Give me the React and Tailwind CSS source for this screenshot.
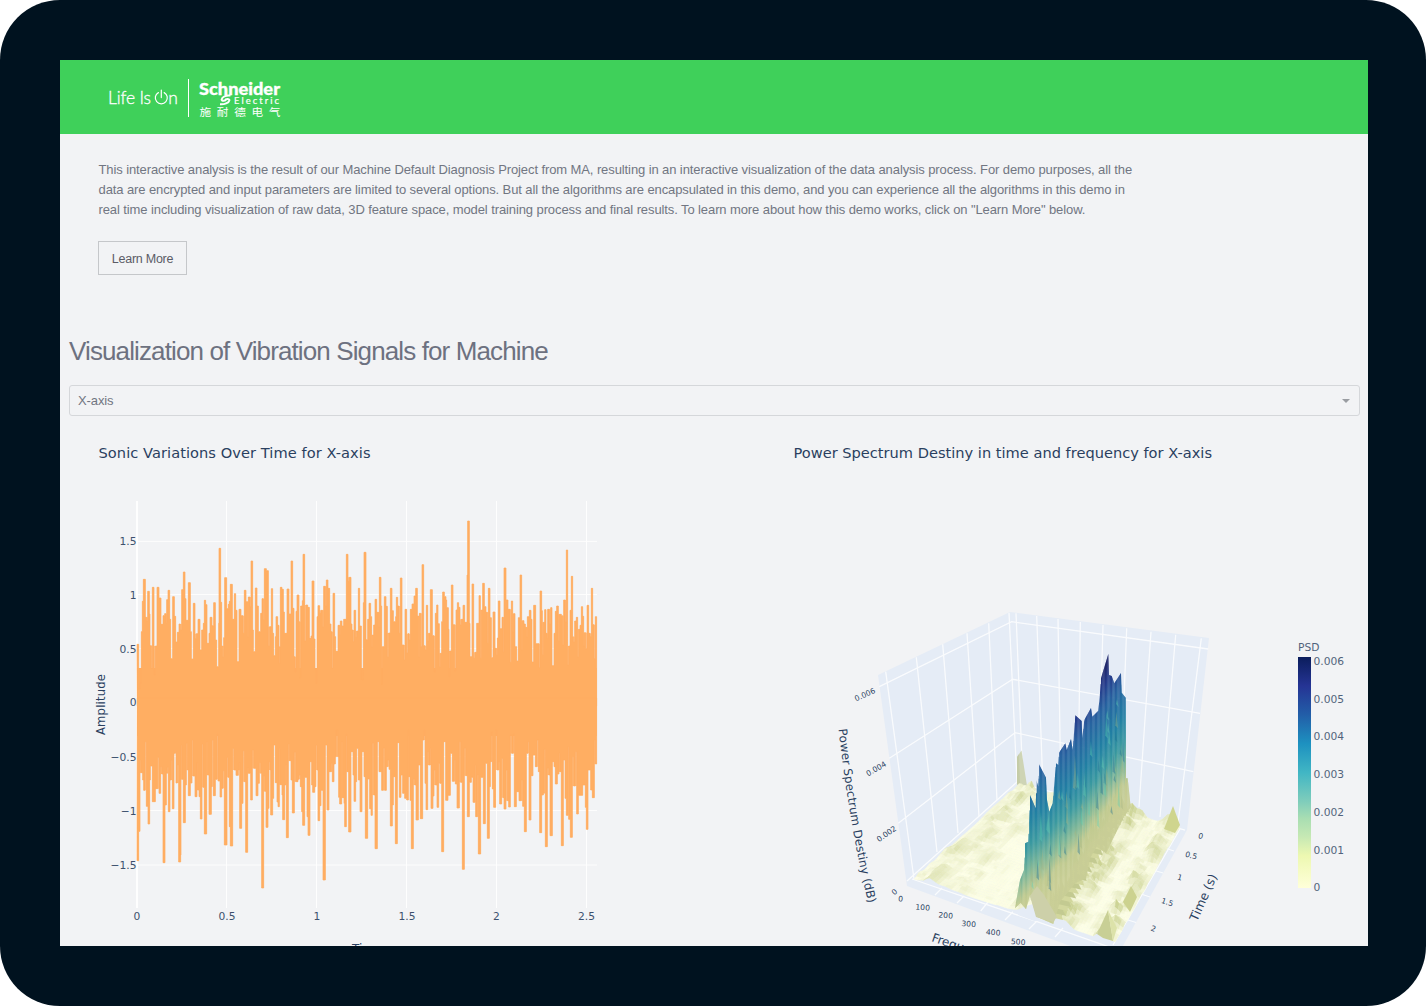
import React from "react";

/* Envelope samples of the vibration signal: x and y of every step, in thirds of a pixel. */
const UPPER_A =
  "141 463,146 597,151 578,154 425,157 334,160 268,166 382,170 392,173 304,178 372,180 467,184 537,187 292,192 555,196 468,201 292,207 324,213 403,219 377,224 371,228 398,230 329,234 301,239 388,242 506,248 320,253 379,257 456,262 427,267 402,271 420,275 299,280 246,285 326,288 391,295 278,301 425,304 507,310 340,315 446,319 431,324 388,330 480,335 420,340 400,343 331,347 344,351 460,357 430,360 382,366 407,371 338,376 450,380 530,386 400,387 175,392 337,395 468,398 500,401 443,404 263,410 356,415 343,418 334,421 283,427 388,433 311,437 361,441 515,447 358,453 377,459 430,463 301,468 335,473 440,475 321,480 350,483 213,488 420,490 485,496 294,501 348,505 425,512 370,516 326,520 390,523 236,529 242,535 467,539 410,544 296,548 430,551 497,556 440,558 380,563 406,567 520,569 470,571 292,576 298,580 366,583 430,591 297,597 372,603 213,608 355,612 500,615 546,618 364,621 315,627 395,629 563,632 348,637 332,639 193,644 453,648 345,653 352,658 445,663 438,666 273,672 447,675 538,678 580,681 380,684 347,689 370,693 361,698 410,701 289,706 347,709 270,714 295,719 402,723 425,726 535,729 310,734 440,737 484,744 406,749 435,751 393,756 408,761 388,769 193,774 274,778 262";
const UPPER_B =
  "3 402,6 420,9 455,12 361,17 442,20 423,25 295,29 408,34 570,40 338,42 187,48 449,53 388,57 340,62 380,65 470,67 435,71 405,75 328,80 367,86 410,88 262,93 348,95 583,97 470,103 320,108 349,112 500,116 429,121 295,126 362,130 395,137 380,139 322,143 348,147 430,151 264,156 465,162 510,165 358,170 489,174 431,177 450,181 358,186 342,192 318,197 295,202 378,206 500,208 370,212 470,216 224,221 467,225 480,229 346,233 453,236 430,241 299,247 437,252 545,256 370,260 345,264 401,268 530,271 490,275 395,278 306,283 320,288 330,290 353,295 418,297 560,299 483,304 285,309 404,314 543,318 360,322 338,326 352,330 405,334 388,339 346,344 397,351 255,353 93,358 400,360 500,366 282,371 505,375 487,380 400,387 317,391 505,394 360,398 280,403 350,408 367,412 460,415 295,420 383,424 503,429 366,435 475,439 495,442 444,445 333,450 416,456 382,460 487,462 234,468 330,474 358,480 517,484 333,488 425,490 371,495 470,500 513,505 383,510 255,515 480,517 392,522 402,526 412,530 440,532 380,538 361,543 388,546 516,551 346,557 461,567 533,570 303,575 362,577 495,580 397,584 359,588 430,591 445,593 358,598 402,602 353,606 527,612 430,616 364,620 348,625 453,628 373,634 377,638 465,641 330,646 395,649 180,653 525,656 468,660 361,664 259,668 440,670 455,674 393,679 382,683 500,686 418,690 406,694 350,698 379,701 467,703 428,707 476,711 346,716 430,720 440,724 295,728 404,732 506,736 380";
const LOWER_A =
  "141 422,146 334,150 120,152 158,158 180,161 211,165 65,169 259,174 312,179 180,181 138,187 245,196 206,203 112,207 220,212 140,215 162,219 428,225 255,229 160,232 142,235 275,240 180,244 121,247 266,252 100,256 95,258 189,262 135,266 426,272 405,273 75,275 178,280 308,286 195,289 70,292 150,295 227,301 189,306 60,309 168,315 230,321 128,322 210,327 230,331 297,336 72,339 202,343 342,350 65,352 165,357 283,364 200,366 60,370 227,376 178,381 42,384 183,390 231,395 205,399 152,403 375,411 112,414 172,418 320,421 378,428 85,432 150,438 166,445 150,448 128,449 325,455 250,459 92,463 185,467 397,473 143,475 160,482 240,487 90,491 145,498 227,504 190,508 128,512 160,515 504,521 168,524 214,528 322,534 265,537 125,540 150,542 285,548 235,551 75,556 188,561 246,564 260,568 85,570 194,576 225,578 299,584 195,587 135,589 353,595 72,598 122,603 180,607 279,613 97,617 185,624 178,627 165,631 200,635 275,638 316,644 172,651 290,654 346,660 125,665 195,668 217,674 200,678 75,681 150,684 302,689 257,693 211,699 480,706 75,711 270,717 155,724 130,727 185,732 132,736 110,739 30,743 110,746 232,749 252,755 65,757 233,762 250,764 320,769 42,771 155,776 336";
const LOWER_B =
  "3 95,9 165,12 244,17 185,20 85,25 180,30 275,36 95,42 170,46 355,53 177,59 266,63 286,67 70,71 225,75 386,82 65,87 155,95 211,100 85,104 211,109 140,113 120,117 148,121 318,127 255,130 170,136 371,142 68,148 232,153 165,158 220,164 235,170 240,175 30,176 170,180 241,184 386,190 178,194 195,198 300,205 135,211 296,218 60,222 30,225 190,228 269,233 95,236 135,241 85,243 265,249 228,252 150,256 195,261 262,266 130,270 190,275 395,281 65,287 241,294 226,301 100,307 184,313 120,316 192,321 264,328 65,332 187,337 448,343 85,347 167,352 290,358 187,364 172,369 247,375 135,377 290,382 165,385 402,392 172,400 311,406 130,412 355,418 200,421 125,424 35,427 207,431 262,437 30,441 150,446 125,449 252,455 115,459 233,462 267,468 150,472 242,476 261,481 45,485 100,490 42,493 260,499 215,507 242,514 180,518 259,523 335,529 100,534 65,537 300,543 167,549 105,556 140,561 60,565 155,569 338,575 225,580 220,583 88,586 380,592 145,596 165,600 347,607 125,612 140,616 192,622 162,627 100,629 155,634 377,640 120,645 235,649 286,654 80,656 298,661 352,667 110,671 198,676 95,680 282,685 226,698 195,706 262,709 328,714 150,722 210,727 233,733 60,736 132";

const parse = (s, ox, oy) =>
  s.split(",").map((p) => {
    const [x, y] = p.split(" ").map(Number);
    return [x / 3 + ox, y / 3 + oy];
  });

function steps(points, end) {
  let d = "";
  points.forEach(([x, y], i) => {
    const nx = i + 1 < points.length ? points[i + 1][0] : end;
    d += `L${x.toFixed(2)} ${y.toFixed(2)}H${nx.toFixed(2)}`;
  });
  return d;
}

/* Narrow gaps between neighbouring strokes, closed up to the shorter neighbour. */
function closeGaps(points, sign) {
  return points.map(([x, y], i) => {
    if (i === 0 || i + 1 >= points.length) return [x, y];
    const width = points[i + 1][0] - x;
    const limit = sign * Math.min(sign * points[i - 1][1], sign * points[i + 1][1]);
    const gap = (limit - y) * sign;
    return width < 1.5 && gap > 0 ? [x, limit] : [x, y];
  });
}

const END = 596.6;
const upper = [...parse(UPPER_A, 90, 490), ...parse(UPPER_B, 350, 490)];
const lower = [...parse(LOWER_A, 90, 720), ...parse(LOWER_B, 350, 720)];
const shapeUp = (pts) => `M137.3 706${steps(pts, END)}V706Z`;
const shapeDown = (pts) => `M137.3 698${steps(pts, END)}V698Z`;

function SonicChart() {
  return (
    <svg viewBox="60 430 654 516" className="h-[516px] w-[654px] shrink-0" fontFamily="'DejaVu Sans', Verdana, sans-serif" fill="#2a3f5f">
      <text x="98.5" y="457.5" fontSize="14.6" textLength="272">Sonic Variations Over Time for X-axis</text>
      <g stroke="#ffffff" strokeWidth="1" opacity="0.95">
        {[226.5, 316.5, 406.5, 496.5, 586.5].map((x) => <path key={x} d={`M${x} 501V908`} />)}
        {[541.3, 594.6, 648.6, 702.6, 756.6, 810.6, 865].map((y) => <path key={y} d={`M137 ${y}H597`} />)}
        <path d="M137 501V908" strokeWidth="2" />
      </g>
      <g fill="#ffae62" opacity="0.7">
        <path d={shapeUp(closeGaps(upper, -1))} />
        <path d={shapeDown(closeGaps(lower, 1))} />
      </g>
      <path d="M137 668H596.7V736H137Z" fill="#ffae62" />
      <g fill="#ffae62" stroke="#ffae62" strokeWidth="0.7">
        <path d={shapeUp(upper)} />
        <path d={shapeDown(lower)} />
      </g>
      <g fontSize="10.7" textAnchor="end" opacity="0.9">
        {[["1.5", 544.5], ["1", 598.5], ["0.5", 652.5], ["0", 706.2], ["−0.5", 760.5], ["−1", 814.5], ["−1.5", 868.5]].map(([t, y]) => (
          <text key={t} x="136.5" y={y}>{t}</text>
        ))}
      </g>
      <g fontSize="10.7" textAnchor="middle" opacity="0.9">
        {[["0", 137], ["0.5", 227], ["1", 317], ["1.5", 407], ["2", 496.5], ["2.5", 586.5]].map(([t, x]) => (
          <text key={t} x={x} y="920">{t}</text>
        ))}
      </g>
      <text transform="translate(105 735) rotate(-90)" fontSize="11.6" textLength="61">Amplitude</text>
      <text x="352" y="953.4" fontSize="12">Time</text>
    </svg>
  );
}

/* ---- power spectrum surface ---- */
const hash = (i, j) => {
  const s = Math.sin(i * 127.1 + j * 311.7) * 43758.5453;
  return s - Math.floor(s);
};
const noise = (x, y) => {
  const i = Math.floor(x), j = Math.floor(y);
  const a = x - i, b = y - j;
  const u = a * a * (3 - 2 * a), v = b * b * (3 - 2 * b);
  return (hash(i, j) * (1 - u) + hash(i + 1, j) * u) * (1 - v) + (hash(i, j + 1) * (1 - u) + hash(i + 1, j + 1) * u) * v;
};
const mix = (a, b, t) => a.map((c, i) => Math.round(c + (b[i] - c) * t));
const rgb = (c) => `rgb(${c.join(",")})`;

const C_LEFT = [914, 879], C_FRONT = [1115, 943], C_RIGHT = [1180, 827], C_BACK = [1019, 786];
const bell = (x, m, w) => Math.exp(-((x - m) * (x - m)) / (w * w));
function height(u, v) {
  const n = noise(u * 26, v * 20);
  const amp = 1 + 13 * bell(u, 0.04, 0.07) + 3 * bell(u, 0.2, 0.05) + 16 * bell(u, 0.95, 0.05) + 14 * bell(u, 0.72, 0.06) + 6 * bell(u, 0.52, 0.05);
  return amp * Math.pow(n, 1.7) * Math.min(1, 0.35 + 6 * Math.min(u, 1 - u));
}
function project(u, v, h) {
  const x = (C_LEFT[0] * (1 - u) + C_FRONT[0] * u) * (1 - v) + (C_BACK[0] * (1 - u) + C_RIGHT[0] * u) * v;
  const y = (C_LEFT[1] * (1 - u) + C_FRONT[1] * u) * (1 - v) + (C_BACK[1] * (1 - u) + C_RIGHT[1] * u) * v;
  return [x, y - h];
}
const floor = [];
const NU = 64, NV = 48;
for (let j = NV - 1; j >= 0; j--) {
  for (let i = 0; i < NU; i++) {
    const u0 = i / NU, u1 = (i + 1) / NU, v0 = j / NV, v1 = (j + 1) / NV;
    const h00 = height(u0, v0), h10 = height(u1, v0), h11 = height(u1, v1), h01 = height(u0, v1);
    const pts = [project(u0, v0, h00), project(u1, v0, h10), project(u1, v1, h11), project(u0, v1, h01)];
    const slope = h10 - h00 + (h00 - h01) * 0.6;
    const h = (h00 + h10 + h11 + h01) / 4;
    const shade = Math.max(0, Math.min(1, h * 0.06 + Math.abs(slope) * 0.12 + (slope < -0.3 ? 0.06 : 0)));
    floor.push({ d: "M" + pts.map((p) => p.map((c) => c.toFixed(1)).join(" ")).join("L") + "Z", c: rgb(mix([254, 255, 231], [204, 211, 148], shade)) });
  }
}

const RIDGE_TOP = [
  [45, 925], [60, 840], [72, 810], [75, 730], [85, 725], [90, 585], [107, 625], [109, 540], [115, 560], [117, 493], [138, 533], [141, 600], [148, 635], [158, 610], [162, 560], [168, 490], [175, 495], [177, 458], [196, 430], [200, 450], [213, 417], [218, 450], [226, 346], [245, 363], [247, 415], [253, 360], [273, 324], [277, 350], [295, 332], [299, 290], [303, 235], [325, 162], [327, 225], [335, 228], [343, 250], [363, 219], [365, 278], [377, 293], [378, 535], [383, 535], [392, 622],
];
const RIDGE_BOTTOM = [
  [45, 925], [62, 908], [78, 928], [90, 885], [110, 950], [160, 972], [180, 905], [225, 850], [258, 835], [270, 775], [290, 740], [318, 760], [340, 715], [372, 650], [392, 622],
];
const at = (list, x) => {
  for (let i = 0; i < list.length - 1; i++) {
    const [x0, y0] = list[i], [x1, y1] = list[i + 1];
    if (x >= x0 && x <= x1) return x1 === x0 ? y1 : y0 + ((y1 - y0) * (x - x0)) / (x1 - x0);
  }
  return list[list.length - 1][1];
};
const COLD = [
  [0, [201, 206, 150]], [0.12, [192, 202, 145]], [0.25, [120, 180, 152]], [0.38, [58, 153, 160]], [0.54, [33, 128, 163]], [0.76, [40, 98, 160]], [0.9, [37, 58, 138]], [1, [31, 38, 106]],
];
const ridge = [];
for (let x = 45; x < 392; x += 2.5) {
  const k = Math.round(x / 2.5);
  const px = x / 3 + 1000;
  const base = px < 1070 ? 912 - (px - 1030) * 0.9 : 876 - (px - 1070) * 1.35;
  const scale = 174 - (px - 1030) * 0.15;
  const shift = (hash(k, 3) - 0.5) * 8;
  ridge.push({ id: `r${k}`, x: px, w: 1.15, y0: base + shift, y1: base + shift - scale, top: at(RIDGE_TOP, x) / 3 + 600, bottom: at(RIDGE_BOTTOM, x) / 3 + 600 });
}
const outline = "M" + [...RIDGE_TOP, ...[...RIDGE_BOTTOM].reverse()].map(([x, y]) => `${(x / 3 + 1000).toFixed(1)} ${(y / 3 + 600).toFixed(1)}`).join("L") + "Z";
const flecks = [];
for (let i = 0; i < 64; i++) {
  const x = 1030 + hash(i, 11) * 94;
  const b = 905 - (x - 1030) * 1.2;
  const y = b - hash(i, 17) * 105;
  const len = 6 + hash(i, 23) * 22;
  flecks.push({ d: `M${x.toFixed(1)} ${y.toFixed(1)}l1.6 ${len.toFixed(1)}l-2.6 -3Z`, c: i % 3 === 0 ? "#62d0b4" : i % 3 === 1 ? "#1d6d92" : "#a7b684" });
}
/* Low folds where the ridge runs out onto the plane. */
const folds = [];
for (let i = 0; i < 26; i++) {
  const t = i / 25;
  const x = 1056 + t * 66, y = 915 - t * 108;
  const h = 12 + hash(i, 5) * 20;
  folds.push({ d: `M${x - 6} ${y + 2}L${x - 3} ${y - h}L${x + 7} ${y + 5}Z`, c: i % 2 ? "#c3ca91" : "#d2d79d" });
}

function SpectrumChart() {
  return (
    <svg viewBox="714 430 654 516" className="h-[516px] w-[654px] shrink-0" fontFamily="'DejaVu Sans', Verdana, sans-serif" fill="#2a3f5f">
      <defs>
        <linearGradient id="psd" x1="0" y1="0" x2="0" y2="1">
          <stop offset="0" stopColor="#0b1d5c" />
          <stop offset="0.125" stopColor="#253494" />
          <stop offset="0.25" stopColor="#225ea8" />
          <stop offset="0.375" stopColor="#1d91c0" />
          <stop offset="0.5" stopColor="#41b6c4" />
          <stop offset="0.625" stopColor="#7fcdbb" />
          <stop offset="0.7" stopColor="#a9deb2" />
          <stop offset="0.78" stopColor="#c7e9b4" />
          <stop offset="0.86" stopColor="#edf8b1" />
          <stop offset="1" stopColor="#ffffd9" />
        </linearGradient>
        <clipPath id="ridgeShape"><path d={outline} /></clipPath>
        {ridge.map((r) => (
          <linearGradient key={r.id} id={r.id} gradientUnits="userSpaceOnUse" x1="0" x2="0" y1={r.y0} y2={r.y1}>
            {COLD.map(([o, c]) => <stop key={o} offset={o} stopColor={rgb(c)} />)}
          </linearGradient>
        ))}
      </defs>
      <text x="793.5" y="458" fontSize="14.6" textLength="418.5">Power Spectrum Destiny in time and frequency for X-axis</text>

      <path d="M878 675L1010 612L1209 638L1187 830L1114 962L907 886Z" fill="#e5ecf6" />
      <g stroke="#ffffff" strokeWidth="1.3" fill="none" opacity="0.8">
        <path d="M885.7 671.7L914 879M916.3 657.3L937 852M942.7 644.3L958 833M967 633.3L979 816M988.7 623.3L997 800M1009 612.7L1017 782" />
        <path d="M1016 613.3L1023 785M1036.7 616L1043 790M1058 619L1061 795M1080.3 622L1078 800M1103 625L1098 803M1126.7 628.3L1120 805M1151 631.7L1139 807M1175.7 634.7L1160 817M1201.3 638.3L1178 823" />
        <path d="M879.3 686.7L1011.7 621.7L1208.3 649M889.3 758.3L1012.7 679.3L1200 713.3M898.3 823.3L1015 732.7L1193.3 771.7M907 881L1017 782L1185 830" />
        <path d="M912 879L1037 921.7L1115 949M1180 829L1113 945" />
        <path d="M935 895L942 888M957 903L964 896M980.7 911L988 902M1005 920L1013 911.7M1029 929L1038 920M1055 937L1063 928" />
        <path d="M1166 848.5L1174 851M1153 870L1163 873M1141 894L1150 897M1128 920L1136 922.5" />
      </g>

      <path d="M1017 757L1021.5 750.5L1027 786L1017 785Z" fill="#ced4b5" />
      <path d="M1017 757L1019 754L1020 784H1017Z" fill="#bfc79f" opacity="0.6" />
      <g>{floor.map((f, i) => <path key={i} d={f.d} fill={f.c} stroke={f.c} strokeWidth="0.4" />)}</g>
      <path d="M1164 829L1173 806L1180 825L1175 833Z" fill="#cfd58e" />
      <path d="M1097 934L1108 910L1113 941L1103 938Z" fill="#c8cf95" />
      <path d="M1108 910L1117 928L1113 941Z" fill="#dce2a9" />
      <path d="M1123 902L1131 886L1137 897L1130 912Z" fill="#ccd28f" />
      <path d="M1017 910L1026 906L1036 903L1040 921L1034 921L1018 915Z" fill="#e5ecf6" />
      <g>{folds.map((f, i) => <path key={i} d={f.d} fill={f.c} />)}</g>
      <g clipPath="url(#ridgeShape)">
        {ridge.map((r) => <rect key={r.id} x={r.x} y={r.top - 8} width={r.w} height={r.bottom - r.top + 16} fill={`url(#${r.id})`} />)}
        <g opacity="0.38">{flecks.map((f, i) => <path key={i} d={f.d} fill={f.c} />)}</g>
      </g>
      <path d="M1030 896L1036 917L1053 922L1057 917L1044 895L1037 886Z" fill="#cdd0a9" />

      <g fontSize="7.6" textAnchor="middle">
        <text transform="translate(866 697) rotate(-24)">0.006</text>
        <text transform="translate(877.5 771) rotate(-30)">0.004</text>
        <text transform="translate(888 836) rotate(-35)">0.002</text>
        <text transform="translate(896 894) rotate(-40)">0</text>
        <text transform="translate(900.5 901.5) rotate(5)">0</text>
        <text transform="translate(922.5 910) rotate(4)">100</text>
        <text transform="translate(945.5 918) rotate(4)">200</text>
        <text transform="translate(968.5 926.5) rotate(4)">300</text>
        <text transform="translate(993 935) rotate(4)">400</text>
        <text transform="translate(1018 944.5) rotate(4)">500</text>
        <text transform="translate(1200 838.5) rotate(14)">0</text>
        <text transform="translate(1190.5 858) rotate(14)">0.5</text>
        <text transform="translate(1179 880) rotate(16)">1</text>
        <text transform="translate(1166.5 904.5) rotate(18)">1.5</text>
        <text transform="translate(1152.5 931) rotate(20)">2</text>
      </g>
      <path id="psdAxis" d="M838.5 729Q850 830 869 906" fill="none" />
      <text fontSize="11.8"><textPath href="#psdAxis" textLength="177">Power Spectrum Destiny (dB)</textPath></text>
      <text transform="translate(931 941) rotate(19)" fontSize="12">Frequency</text>
      <text transform="translate(1197 922) rotate(-66)" fontSize="12.2" textLength="50">Time (s)</text>

      <rect x="1298" y="657" width="13" height="231" fill="url(#psd)" />
      <g fontSize="10.7" opacity="0.8">
        <text x="1298" y="651">PSD</text>
        {[["0.006", 665], ["0.005", 702.7], ["0.004", 740.3], ["0.003", 778.3], ["0.002", 816], ["0.001", 853.7], ["0", 891.3]].map(([t, y]) => (
          <text key={t} x="1313.5" y={y}>{t}</text>
        ))}
      </g>
    </svg>
  );
}

function Logo() {
  return (
    <svg viewBox="104 75 182 44" className="h-[44px] w-[182px]" fill="#ffffff" role="img" aria-label="Life Is On Schneider Electric">
      <g fontFamily="Lato, sans-serif" fontWeight="300" fontSize="17.5" stroke="#fff" strokeWidth="0.3">
        <text x="108" y="103.5" textLength="43">Life Is</text>
        <text x="168.3" y="103.5">n</text>
      </g>
      <path d="M158.4 92.6A6 6 0 1 0 164.2 92.6M161.3 90V97.6" fill="none" stroke="#fff" strokeWidth="1.2" strokeLinecap="round" />
      <path d="M188.5 79V117" stroke="#fff" strokeWidth="1" />
      <text x="199" y="94.6" fontFamily="Lato, sans-serif" fontWeight="900" fontSize="16" textLength="81" lengthAdjust="spacingAndGlyphs" stroke="#fff" strokeWidth="0.3">Schneider</text>
      <text x="234" y="103.6" fontFamily="Lato, sans-serif" fontWeight="400" fontSize="9.4" textLength="45" stroke="#fff" strokeWidth="0.2">Electric</text>
      <path d="M230.5 95.6C226 95 222 97 221.6 99.6C221.5 101.4 225.5 101 226.2 99.4M220 104.3C224.5 104.6 228.8 103 229.4 100.2C229.6 98.6 225.6 98.8 225 100.4" fill="none" stroke="#fff" strokeWidth="2" />
      <text transform="translate(199.6 116) scale(1.08 0.94)" fontFamily="'Noto Sans CJK SC', sans-serif" fontSize="10.8" letterSpacing="5.2">施耐德电气</text>
    </svg>
  );
}

export default function App() {
  return (
    <div className="h-[1006px] w-[1426px] overflow-hidden bg-white">
      <div className="h-full w-full rounded-[60px] bg-[#00121f] pt-[60px] pr-[58px] pb-[60px] pl-[60px]">
        <main className="flex h-full w-full flex-col overflow-hidden bg-[#f2f3f5] font-['Liberation_Sans',Arial,sans-serif] text-[#717682]">
          <header className="flex h-[74px] shrink-0 items-center bg-[#3fd05a] pl-[44px]">
            <Logo />
          </header>
          <section className="flex h-[196px] shrink-0 flex-col items-start pt-[25.5px] pl-[38.5px]">
            <p className="text-[13px] leading-[20.4px] tracking-[-0.098px] whitespace-nowrap">
              This interactive analysis is the result of our Machine Default Diagnosis Project from MA, resulting in an interactive visualization of the data analysis process. For demo purposes, all the
              <br />
              data are encrypted and input parameters are limited to several options. But all the algorithms are encapsulated in this demo, and you can experience all the algorithms in this demo in
              <br />
              real time including visualization of raw data, 3D feature space, model training process and final results. To learn more about how this demo works, click on "Learn More" below.
            </p>
            <button className="mt-[20.5px] -ml-[0.5px] h-[34px] w-[89px] border border-[#c5c7ca] pt-[2px] text-[12.5px] tracking-[-0.25px] text-[#5b5c66]">Learn More</button>
          </section>
          <h1 className="h-[55px] shrink-0 pl-[9px] text-[26px] leading-[42px] tracking-[-0.88px] text-[#6d7180]">Visualization of Vibration Signals for Machine</h1>
          <div className="mx-[8.5px] flex h-[31px] shrink-0 items-center justify-between rounded-[3px] border border-[#d5d7da] pr-[9px] pl-[8.5px] text-[13px] tracking-[-0.1px]">
            <span>X-axis</span>
            <span className="h-0 w-0 border-x-[4.5px] border-t-[4.5px] border-x-transparent border-t-[#9a9da2]" />
          </div>
          <section className="mt-[14px] flex">
            <SonicChart />
            <SpectrumChart />
          </section>
        </main>
      </div>
    </div>
  );
}
